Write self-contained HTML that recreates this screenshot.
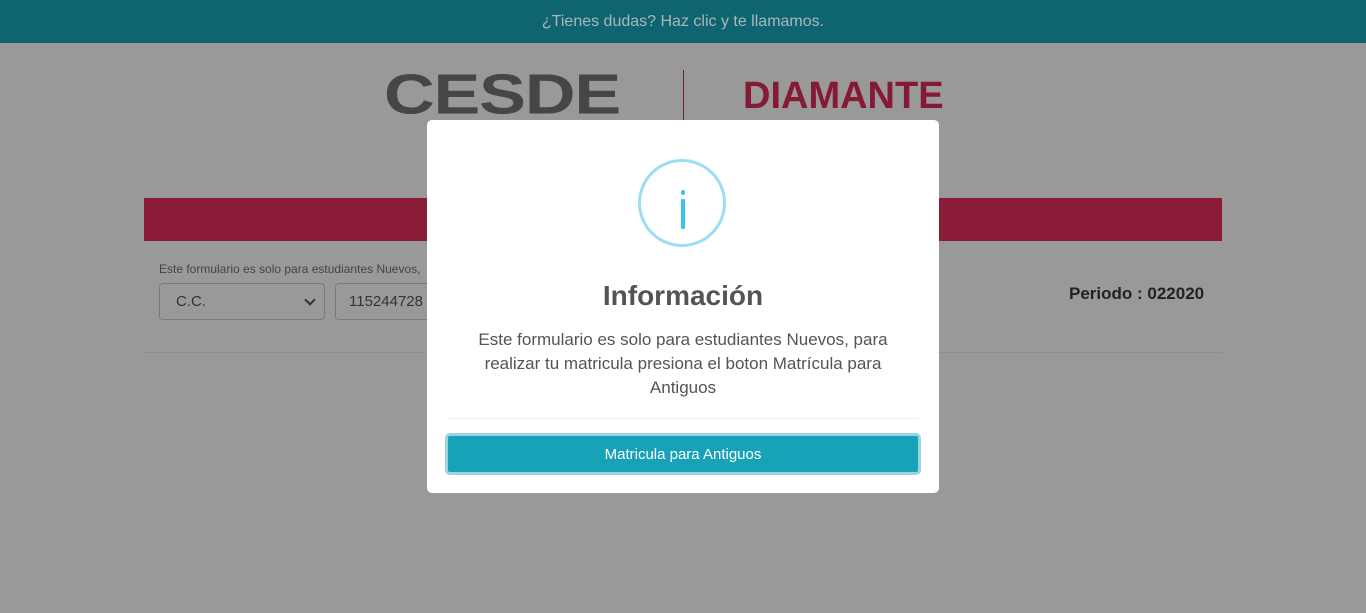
<!DOCTYPE html>
<html><head><meta charset="utf-8"><style>
body{margin:0;width:1366px;height:613px;background:#999;font-family:"Liberation Sans",sans-serif;position:relative;overflow:hidden}
.top{height:43px;background:#0e6470;color:#a9b8bb;text-align:center;font-size:16px;line-height:43px}
.abs{position:absolute}
</style></head><body>
<div class="top">¿Tienes dudas? Haz clic y te llamamos.</div>
<div class="abs" style="left:384px;top:64px;font-size:60px;font-weight:bold;color:#464647;letter-spacing:-1px;line-height:64px;transform:scale(1.17,0.95);transform-origin:left top">CESDE</div>
<div class="abs" style="left:683px;top:70px;width:1px;height:55px;background:#6e2030"></div>
<div class="abs" style="left:743px;top:74px;font-size:38px;font-weight:bold;color:#861a36;line-height:44px">DIAMANTE</div>
<div class="abs" style="left:144px;top:198px;width:1078px;height:43px;background:#8b1c37"></div>
<div class="abs" style="left:159px;top:262px;font-size:12px;color:#444">Este formulario es solo para estudiantes Nuevos,</div>
<div class="abs" style="left:159px;top:283px;width:164px;height:35px;border:1px solid #7a7a7a;border-radius:4px"><span style="position:absolute;left:16px;top:9px;font-size:15px;color:#333">C.C.</span><span style="position:absolute;right:10px;top:12px;width:6px;height:6px;border-right:2px solid #333;border-bottom:2px solid #333;transform:rotate(45deg)"></span></div>
<div class="abs" style="left:335px;top:283px;width:100px;height:35px;border:1px solid #7a7a7a;border-radius:4px"><span style="position:absolute;left:13px;top:9px;font-size:15px;color:#333">115244728</span></div>
<div class="abs" style="left:1069px;top:284px;font-size:17px;font-weight:bold;color:#222">Periodo : 022020</div>
<div class="abs" style="left:144px;top:352px;width:1078px;height:1px;background:#8e8e8e"></div>
<div class="abs" style="left:427px;top:120px;width:512px;height:373px;background:#fff;border-radius:5px">
<div class="abs" style="left:211px;top:39px;width:82px;height:82px;border:3px solid #9dddf2;border-radius:50%"></div>
<div class="abs" style="left:254px;top:70px;width:4px;height:5px;background:#3fc3ee;border-radius:2px"></div>
<div class="abs" style="left:254px;top:79px;width:4px;height:30px;background:#3fc3ee;border-radius:1px"></div>
<div class="abs" style="left:0;width:512px;top:160px;text-align:center;font-size:28px;font-weight:bold;color:#545454">Información</div>
<div class="abs" style="left:30px;width:452px;top:208px;text-align:center;font-size:17px;line-height:24px;color:#545454">Este formulario es solo para estudiantes Nuevos, para realizar tu matricula presiona el boton Matrícula para Antiguos</div>
<div class="abs" style="left:20px;top:298px;width:472px;height:1px;background:#eee"></div>
<div class="abs" style="left:18px;top:313px;width:476px;height:42px;background:#17a2b8;border:3px solid #9bd4de;border-radius:5px;box-sizing:border-box;color:#fff;text-align:center;font-size:15px;line-height:37px">Matricula para Antiguos</div>
</div>
</body></html>
